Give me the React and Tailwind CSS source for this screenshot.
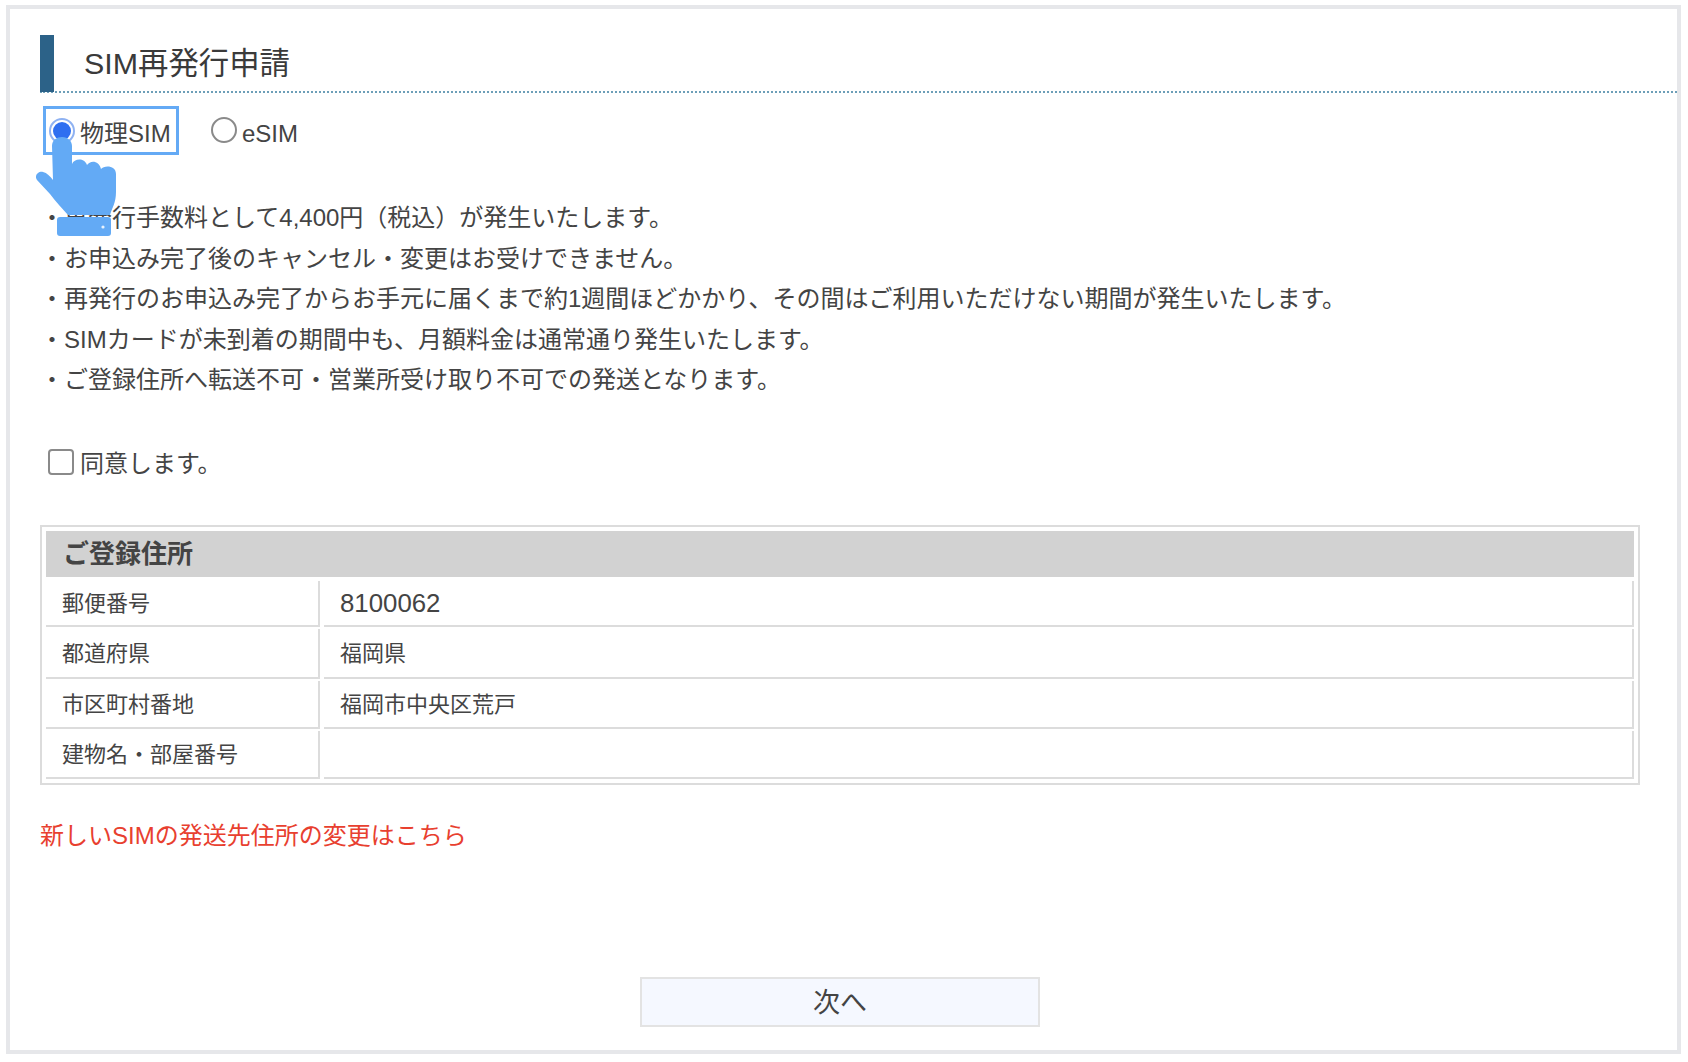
const rows = [
  ["郵便番号", "8100062"],
  ["都道府県", "福岡県"],
  ["市区町村番地", "福岡市中央区荒戸"],
  ["建物名・部屋番号", ""],
];
const notes = [
  "・再発行手数料として4,400円（税込）が発生いたします。",
  "・お申込み完了後のキャンセル・変更はお受けできません。",
  "・再発行のお申込み完了からお手元に届くまで約1週間ほどかかり、その間はご利用いただけない期間が発生いたします。",
  "・SIMカードが未到着の期間中も、月額料金は通常通り発生いたします。",
  "・ご登録住所へ転送不可・営業所受け取り不可での発送となります。",
];
const rowH = ["h-[46px]", "h-[50px]", "h-[48px]", "h-[48px]"];

function Hand() {
  return (
    <svg className="absolute left-[36px] top-[135px]" width="82" height="105" viewBox="36 135 82 105">
      <path
        fill="#63aaf5"
        d="M52 146 C52 140 57 137 62 137 C68 137 72 141 72 146 L72 164 C74 159 84 157 87 165 C90 160 99 160 101 169 C104 165 116 165 116 174 L116 192 C116 203 112 208 110 215 L68 215 C62 208 56 202 50 194 L37 180 C34 176 38 171 43 172 C47 173 50 176 53 180 Z"
      />
      <path
        fill="#63aaf5"
        d="M60 217 L108 217 C110 217 111 218 111 220 L111 233 C111 235 110 236 108 236 L60 236 C58 236 57 235 57 233 L57 220 C57 218 58 217 60 217 Z"
      />
      <circle cx="103" cy="227" r="1.6" fill="#e8f2fd" />
    </svg>
  );
}

export default function App() {
  return (
    <div
      className="relative h-[1062px] w-[1688px] overflow-hidden bg-white pl-[6px] pr-[7px] pt-[5px] text-[#444]"
      style={{ fontFamily: '"Liberation Sans", "Noto Sans CJK JP", sans-serif' }}
    >
      <div className="h-[1049px] border-4 border-[#e6e7ea] pl-[30px]">
        <div className="mt-[26px] flex h-[58px] border-b-2 border-dotted border-[#6d9fb8]">
          <div className="h-[57px] w-[14px] bg-[#2c6288]" />
          <h1 className="ml-[30px] text-[30.4px] leading-[57px] font-normal text-[#3a3a3a]">SIM再発行申請</h1>
        </div>

        <div className="mt-[13px] ml-[3px] flex h-[49px] items-center text-[24px]">
          <label className="flex h-[49px] w-[136px] items-center border-[3px] border-[#64aaf5] pl-[3px]">
            <span className="flex h-[26px] w-[26px] items-center justify-center rounded-full border-2 border-[#8fb2f2]">
              <span className="h-[18px] w-[18px] rounded-full bg-[#2f6ff0]" />
            </span>
            <span className="ml-[5px] pt-[6px]">物理SIM</span>
          </label>
          <label className="ml-[32px] flex h-[49px] items-center">
            <span className="mb-[2px] h-[26px] w-[26px] rounded-full border-2 border-[#8a8a8a]" />
            <span className="ml-[5px] pt-[6px]">eSIM</span>
          </label>
        </div>

        <ul className="mt-[43px] text-[24px] leading-[40.5px]">
          {notes.map((n) => (
            <li key={n}>{n}</li>
          ))}
        </ul>

        <label className="mt-[41px] ml-[8px] flex h-[40px] items-center text-[24px]">
          <span className="h-[26px] w-[26px] rounded-[4px] border-2 border-[#8a8a8a]" />
          <span className="ml-[6px] pt-[4px]">同意します。</span>
        </label>

        <div className="mt-[43px] w-[1600px] border-2 border-[#dcdcdc] p-[4px]">
          <div className="h-[46px] bg-[#d2d2d2] pl-[17px] text-[26px] leading-[46px] font-bold text-[#444]">ご登録住所</div>
          <div className="mt-[4px] flex flex-col gap-[2px]">
            {rows.map(([k, v], i) => (
              <div key={k} className={`flex gap-[4px] text-[22px] ${rowH[i]}`}>
                <div className="flex w-[274px] items-center border-r-2 border-b-2 border-[#dcdcdc] pt-[2px] pl-[16px]">{k}</div>
                <div className={`flex flex-1 items-center border-r-2 border-b-2 border-[#dcdcdc] pt-[2px] pl-[16px] ${i === 0 ? "text-[25.8px]" : ""}`}>{v}</div>
              </div>
            ))}
          </div>
        </div>

        <p className="mt-[31px] text-[24px] leading-[40px] text-[#e8402f]">新しいSIMの発送先住所の変更はこちら</p>

        <button className="mt-[121px] ml-[600px] block h-[50px] w-[400px] border-2 border-[#e3e3e3] bg-[#f5f8ff] pt-[3px] text-[27px] text-[#444]">次へ</button>
      </div>
      <Hand />
    </div>
  );
}
